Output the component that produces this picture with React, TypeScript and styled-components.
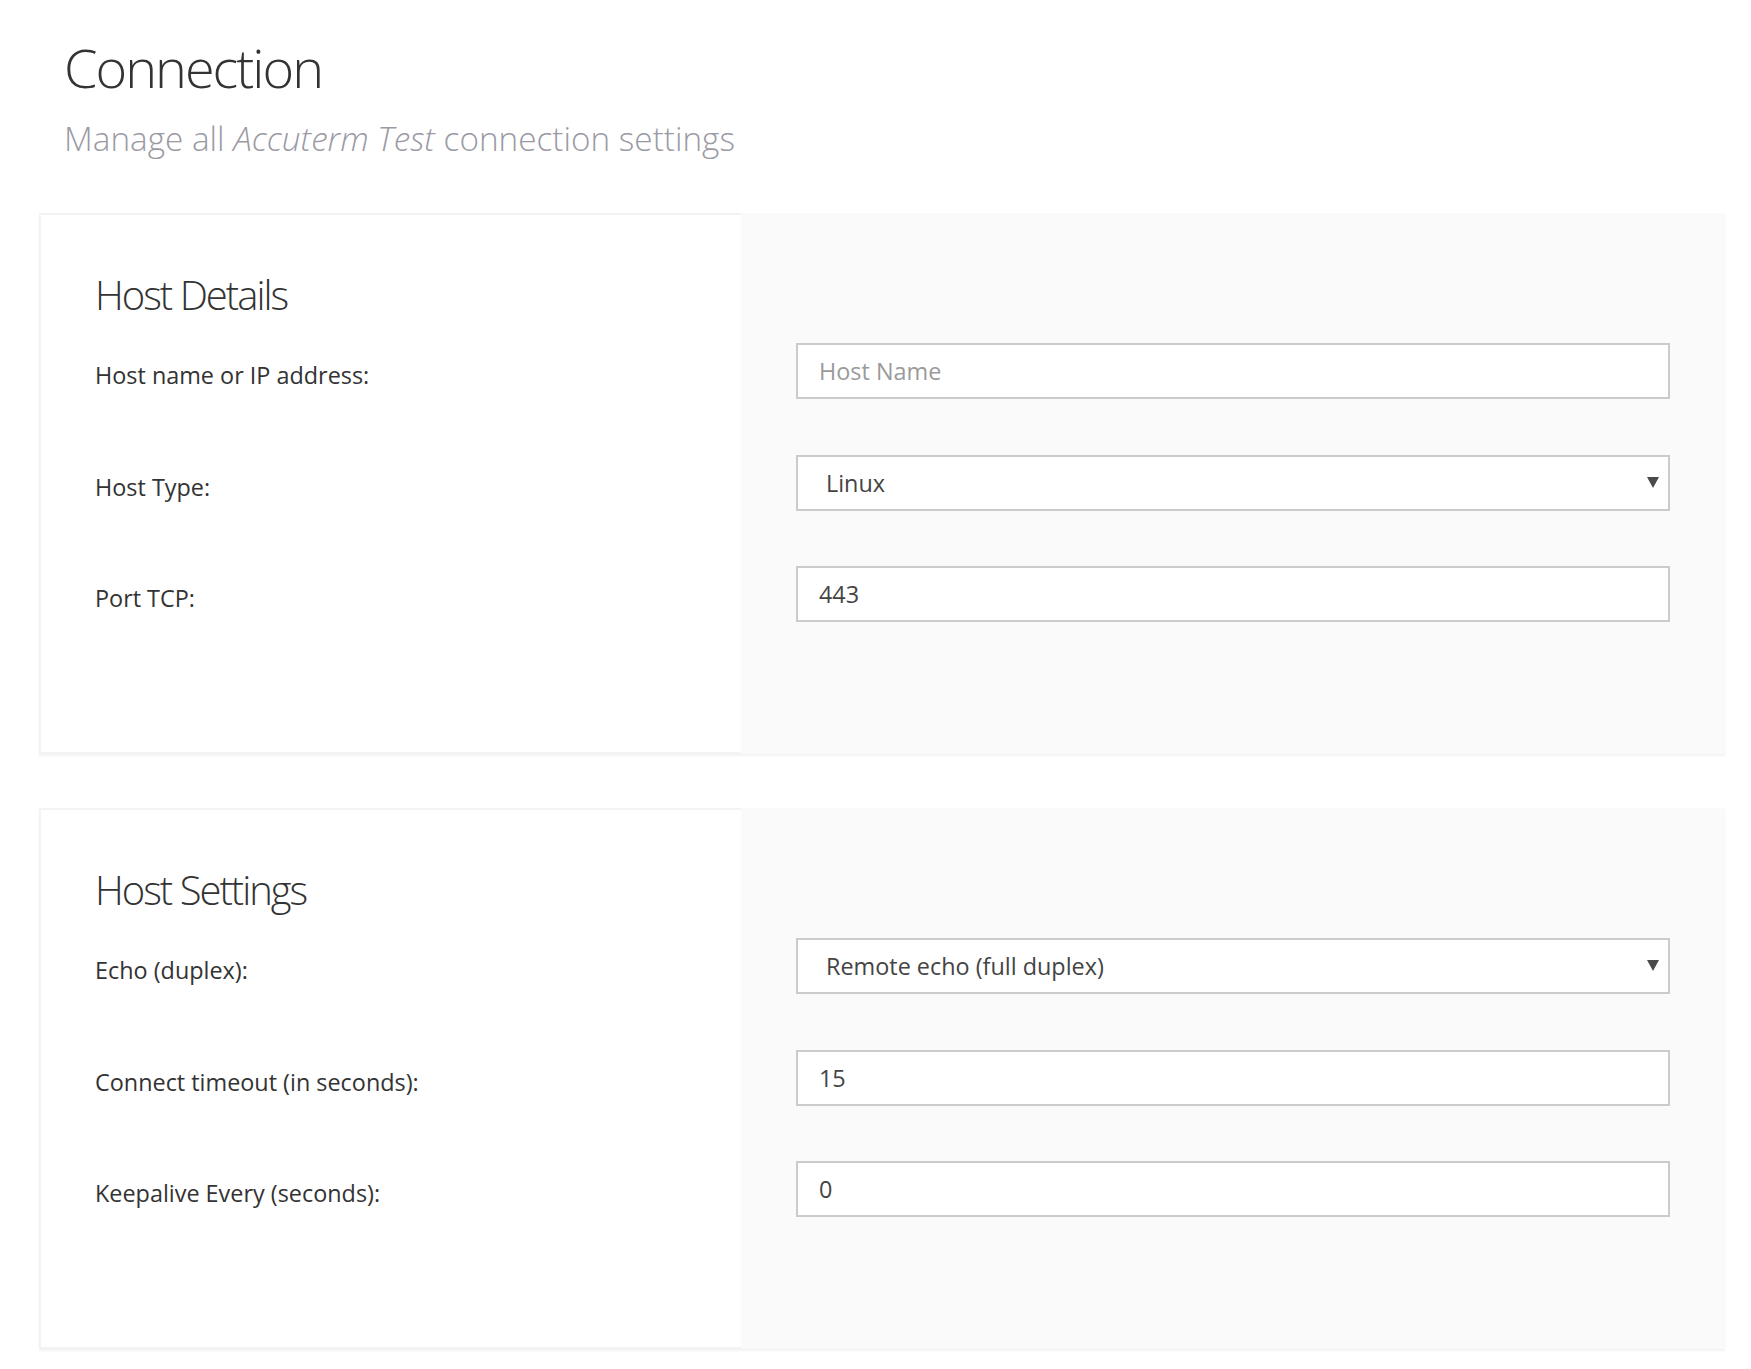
import React from "react";
import styled, { createGlobalStyle } from "styled-components";

const GlobalStyle = createGlobalStyle`
  html, body {
    margin: 0;
    padding: 0;
    background: #ffffff;
  }
  body {
    font-family: "Open Sans", "Noto Sans", sans-serif;
    color: #333333;
  }
`;

const Page = styled.div`
  padding: 35px 26px 40px 39px;
`;

const Header = styled.header`
  padding-left: 25px;
  margin-bottom: 55px;
`;

const Title = styled.h1`
  margin: 0;
  font-size: 54px;
  line-height: 65px;
  font-weight: 300;
  letter-spacing: -2px;
  color: #333333;
`;

const Subtitle = styled.p`
  margin: 18px 0 0;
  font-size: 33.3px;
  line-height: 40px;
  font-weight: 300;
  color: #9a9aa3;

  em {
    font-style: italic;
  }
`;

const Card = styled.section`
  display: flex;
  width: 1686px;
  box-shadow: 0 2px 2px rgba(0, 0, 0, 0.05);

  & + & {
    margin-top: 54px;
  }
`;

const LabelColumn = styled.div`
  width: 702px;
  box-sizing: border-box;
  background: #ffffff;
  border: 2px solid #f3f3f3;
  border-right: none;
  padding: 56px 0 130px 54px;
  display: flex;
  flex-direction: column;
`;

const InputColumn = styled.div`
  flex: 1;
  background: #fafafa;
  padding: 130px 55px 132px;
  display: flex;
  flex-direction: column;
`;

const SectionTitle = styled.h2`
  margin: 0 0 24px;
  font-size: 40px;
  line-height: 48px;
  font-weight: 300;
  letter-spacing: -2px;
  color: #333333;
`;

const Rows = styled.div`
  display: flex;
  flex-direction: column;
  gap: 55.5px;
`;

const Label = styled.label`
  height: 56px;
  box-sizing: border-box;
  padding-top: 8px;
  display: flex;
  align-items: center;
  font-size: 23.4px;
  color: #333333;
`;

const TextInput = styled.input`
  display: block;
  width: 100%;
  height: 56px;
  box-sizing: border-box;
  margin: 0;
  border: 2px solid #cbcbcb;
  border-radius: 0;
  background: #ffffff;
  padding: 0 21px;
  font-family: "Open Sans", "Noto Sans", sans-serif;
  font-size: 23.4px;
  color: #444444;
  outline: none;

  &::placeholder {
    color: #9a9a9a;
  }
`;

const SelectWrap = styled.div`
  position: relative;

  &::after {
    content: "";
    position: absolute;
    right: 11px;
    top: 50%;
    margin-top: -6px;
    border-left: 6px solid transparent;
    border-right: 6px solid transparent;
    border-top: 11px solid #4a4a4a;
    pointer-events: none;
  }
`;

const Select = styled.select`
  display: block;
  width: 100%;
  height: 56px;
  box-sizing: border-box;
  margin: 0;
  border: 2px solid #cbcbcb;
  border-radius: 0;
  background: #ffffff;
  padding: 0 40px 0 28px;
  font-family: "Open Sans", "Noto Sans", sans-serif;
  font-size: 23.4px;
  color: #444444;
  appearance: none;
  -webkit-appearance: none;
  outline: none;
`;

type Field =
  | { label: string; kind: "text"; value?: string; placeholder?: string }
  | { label: string; kind: "select"; value: string; options: string[] };

interface Section {
  title: string;
  fields: Field[];
}

const sections: Section[] = [
  {
    title: "Host Details",
    fields: [
      { label: "Host name or IP address:", kind: "text", placeholder: "Host Name" },
      { label: "Host Type:", kind: "select", value: "Linux", options: ["Linux", "Unix", "Windows"] },
      { label: "Port TCP:", kind: "text", value: "443" },
    ],
  },
  {
    title: "Host Settings",
    fields: [
      {
        label: "Echo (duplex):",
        kind: "select",
        value: "Remote echo (full duplex)",
        options: ["Remote echo (full duplex)", "Local echo (half duplex)"],
      },
      { label: "Connect timeout (in seconds):", kind: "text", value: "15" },
      { label: "Keepalive Every (seconds):", kind: "text", value: "0" },
    ],
  },
];

const FieldControl = ({ field }: { field: Field }) => {
  if (field.kind === "select") {
    return (
      <SelectWrap>
        <Select defaultValue={field.value}>
          {field.options.map((opt) => (
            <option key={opt} value={opt}>
              {opt}
            </option>
          ))}
        </Select>
      </SelectWrap>
    );
  }
  return <TextInput type="text" defaultValue={field.value} placeholder={field.placeholder} />;
};

const App = () => {
  return (
    <>
      <GlobalStyle />
      <Page>
        <Header>
          <Title>Connection</Title>
          <Subtitle>
            Manage all <em>Accuterm Test</em> connection settings
          </Subtitle>
        </Header>

        {sections.map((section) => (
          <Card key={section.title}>
            <LabelColumn>
              <SectionTitle>{section.title}</SectionTitle>
              <Rows>
                {section.fields.map((field) => (
                  <Label key={field.label}>{field.label}</Label>
                ))}
              </Rows>
            </LabelColumn>
            <InputColumn>
              <Rows>
                {section.fields.map((field) => (
                  <FieldControl key={field.label} field={field} />
                ))}
              </Rows>
            </InputColumn>
          </Card>
        ))}
      </Page>
    </>
  );
};

export default App;
